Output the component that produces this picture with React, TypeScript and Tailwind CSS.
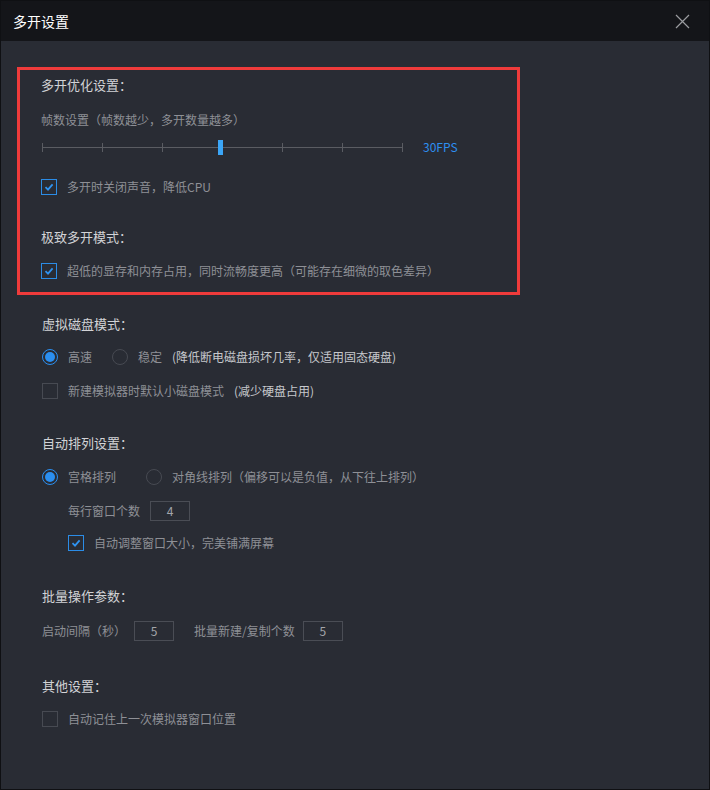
import React from "react";

const font = { fontFamily: '"Noto Sans CJK SC", "Noto Sans", sans-serif' };

function Check({ checked }: { checked: boolean }) {
  return checked ? (
    <span className="w-[16px] h-[16px] border border-[#2b8ce6] flex items-center justify-center shrink-0">
      <svg width="12" height="12" viewBox="0 0 12 12">
        <path d="M2.5 6.2 L5 8.6 L9.6 3.4" fill="none" stroke="#2f93f0" strokeWidth="1.8" />
      </svg>
    </span>
  ) : (
    <span className="block w-[16px] h-[16px] border border-[#474a52] shrink-0" />
  );
}

function Radio({ checked, className = "" }: { checked: boolean; className?: string }) {
  return checked ? (
    <span className={"w-[16px] h-[16px] rounded-full border-[1.5px] border-[#2b8ff0] flex items-center justify-center shrink-0 " + className}>
      <span className="w-[10px] h-[10px] rounded-full bg-[#2b8ff0]" />
    </span>
  ) : (
    <span className={"block w-[16px] h-[16px] rounded-full border border-[#474a52] shrink-0 " + className} />
  );
}

function Title({ children, className = "" }: { children: React.ReactNode; className?: string }) {
  return (
    <div className={"h-[20px] leading-[20px] text-[13px] text-[#d2d3d6] " + className}>{children}</div>
  );
}

function Box({ value, className = "" }: { value: string; className?: string }) {
  return (
    <span className={"w-[40px] h-[20px] border border-[#4a4d55] flex items-center justify-center text-[12px] text-[#a3a5aa] shrink-0 " + className}>
      {value}
    </span>
  );
}

export default function App() {
  const ticks = [0, 60, 120, 180, 240, 300, 360];
  return (
    <div style={font} className="w-[710px] h-[790px] bg-[#292c34] border border-[#0f1013] flex flex-col overflow-hidden">
      <div className="h-[40px] bg-[#141519] flex items-center justify-between pl-[12px] pr-[19px] shrink-0">
        <span className="text-[14px] text-white">多开设置</span>
        <svg width="15" height="15" viewBox="0 0 15 15">
          <path d="M1 1 L14 14 M14 1 L1 14" stroke="#9b9ca0" strokeWidth="1.2" />
        </svg>
      </div>

      <div className="flex flex-col text-[12px] text-[#8e9096]">
        {/* red box */}
        <div className="ml-[16px] mt-[26px] w-[503px] border-[3px] border-[#ef3b3b] pl-[21px] pt-[5px] pb-[11px] flex flex-col">
          <Title>多开优化设置：</Title>
          <div className="mt-[15px] h-[20px] leading-[20px]">帧数设置（帧数越少，多开数量越多）</div>
          <div className="mt-[7px] h-[20px] flex items-center">
            <div className="relative w-[361px] h-[20px] shrink-0">
              <div className="absolute left-[1px] right-0 top-[10px] h-px bg-[#5a5c62]" />
              {ticks.map((t) => (
                <div key={t} className="absolute top-[6px] w-px h-[9px] bg-[#5a5c62]" style={{ left: t + 1 }} />
              ))}
              <div className="absolute left-[177px] top-[3px] w-[5px] h-[15px] bg-[#3ba6f7]" />
            </div>
            <span className="ml-[21px] text-[#2d8ff0]">30FPS</span>
          </div>
          <div className="mt-[20px] h-[20px] flex items-center gap-[10px]">
            <Check checked />
            <span>多开时关闭声音，降低CPU</span>
          </div>
          <Title className="mt-[30px]">极致多开模式：</Title>
          <div className="mt-[14px] h-[20px] flex items-center gap-[10px]">
            <Check checked />
            <span>超低的显存和内存占用，同时流畅度更高（可能存在细微的取色差异）</span>
          </div>
        </div>

        <div className="pl-[41px] flex flex-col">
          <Title className="mt-[19px]">虚拟磁盘模式：</Title>
          <div className="mt-[13px] h-[20px] flex items-center">
            <Radio checked />
            <span className="ml-[10px]">高速</span>
            <Radio checked={false} className="ml-[20px]" />
            <span className="ml-[10px]">稳定</span>
            <span className="ml-[10px] text-[#c6c8cc]">(降低断电磁盘损坏几率，仅适用固态硬盘)</span>
          </div>
          <div className="mt-[14px] h-[20px] flex items-center">
            <Check checked={false} />
            <span className="ml-[10px]">新建模拟器时默认小磁盘模式</span>
            <span className="ml-[10px] text-[#c6c8cc]">(减少硬盘占用)</span>
          </div>

          <Title className="mt-[32px]">自动排列设置：</Title>
          <div className="mt-[14px] h-[20px] flex items-center">
            <Radio checked />
            <span className="ml-[10px]">宫格排列</span>
            <Radio checked={false} className="ml-[30px]" />
            <span className="ml-[10px]">对角线排列（偏移可以是负值，从下往上排列）</span>
          </div>
          <div className="mt-[14px] h-[20px] flex items-center pl-[26px]">
            <span>每行窗口个数</span>
            <Box value="4" className="ml-[10px]" />
          </div>
          <div className="mt-[12px] h-[20px] flex items-center pl-[26px] gap-[10px]">
            <Check checked />
            <span>自动调整窗口大小，完美铺满屏幕</span>
          </div>

          <Title className="mt-[33px]">批量操作参数：</Title>
          <div className="mt-[15px] h-[20px] flex items-center">
            <span>启动间隔（秒）</span>
            <Box value="5" className="ml-[8px]" />
            <span className="ml-[20px]">批量新建/复制个数</span>
            <Box value="5" className="ml-[8px]" />
          </div>

          <Title className="mt-[35px]">其他设置：</Title>
          <div className="mt-[13px] h-[20px] flex items-center gap-[10px]">
            <Check checked={false} />
            <span>自动记住上一次模拟器窗口位置</span>
          </div>
        </div>
      </div>
    </div>
  );
}
